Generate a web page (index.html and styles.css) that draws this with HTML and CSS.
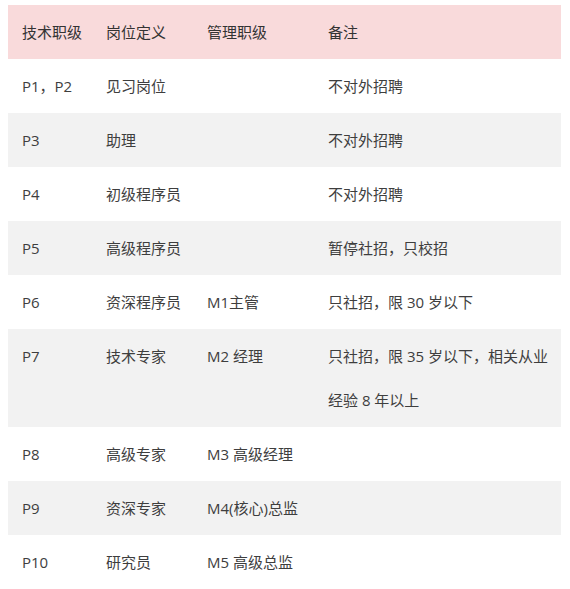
FILE: index.html
```html
<!DOCTYPE html>
<html lang="zh-CN">
<head>
<meta charset="utf-8">
<title>职级</title>
<link rel="stylesheet" href="styles.css">
</head>
<body>
<table class="grade-table">
  <colgroup>
    <col class="c1"><col class="c2"><col class="c3"><col class="c4">
  </colgroup>
  <thead>
    <tr class="head"><th>技术职级</th><th>岗位定义</th><th>管理职级</th><th>备注</th></tr>
  </thead>
  <tbody>
    <tr><td>P1，P2</td><td>见习岗位</td><td></td><td>不对外招聘</td></tr>
    <tr class="alt"><td>P3</td><td>助理</td><td></td><td>不对外招聘</td></tr>
    <tr><td>P4</td><td>初级程序员</td><td></td><td>不对外招聘</td></tr>
    <tr class="alt"><td>P5</td><td>高级程序员</td><td></td><td>暂停社招，只校招</td></tr>
    <tr><td>P6</td><td>资深程序员</td><td>M1主管</td><td>只社招，限 30 岁以下</td></tr>
    <tr class="alt"><td>P7</td><td>技术专家</td><td>M2 经理</td><td><span class="nowrap">只社招，限 35 岁以下，相关从业</span>经验 8 年以上</td></tr>
    <tr><td>P8</td><td>高级专家</td><td>M3 高级经理</td><td></td></tr>
    <tr class="alt"><td>P9</td><td>资深专家</td><td>M4(核心)总监</td><td></td></tr>
    <tr><td>P10</td><td>研究员</td><td>M5 高级总监</td><td></td></tr>
  </tbody>
</table>
</body>
</html>
```
FILE: styles.css
```css
html, body {
  margin: 0;
  padding: 0;
  background: #ffffff;
}
body {
  padding: 5px 9px 0 8px;
  font-family: "Open Sans", "Noto Sans CJK SC", sans-serif;
  font-size: 15px;
  color: #3e3e3e;
}
.grade-table {
  width: 553px;
  border-collapse: collapse;
  table-layout: fixed;
}
.c1 { width: 84px; }
.c2 { width: 101px; }
.c3 { width: 121px; }
.c4 { width: 247px; }
.grade-table th,
.grade-table td {
  padding: 5px 0 5px 14px;
  line-height: 44px;
  height: 44px;
  text-align: left;
  vertical-align: top;
  font-weight: normal;
  word-break: break-all;
}
.nowrap {
  white-space: nowrap;
}
.head {
  background: #f9dadb;
}
.head th {
  color: #333333;
}
.alt {
  background: #f2f2f2;
}
```
